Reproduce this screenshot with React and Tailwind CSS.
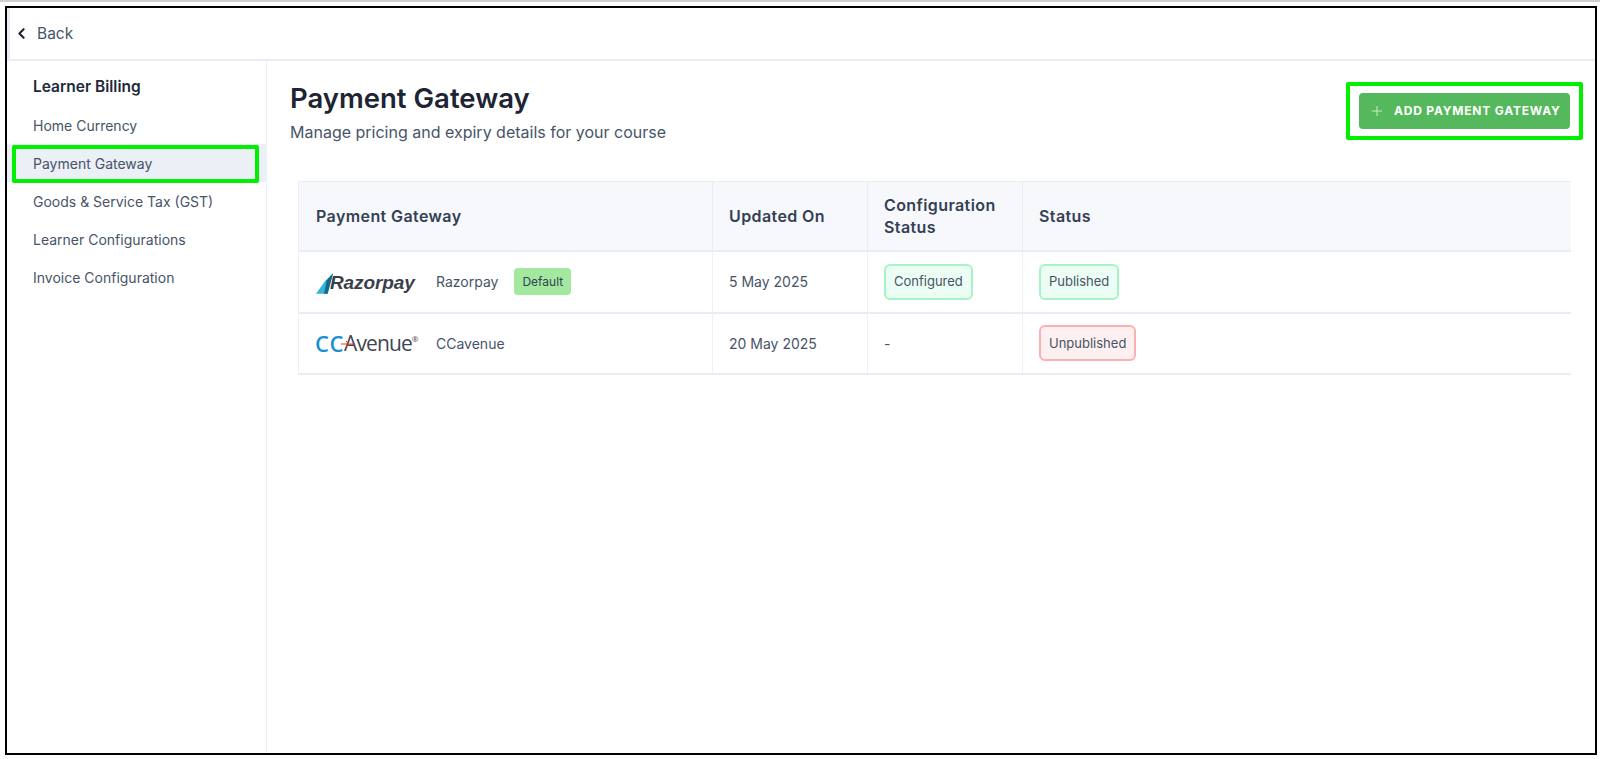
import { ChevronLeft, Plus } from 'lucide-react';

const navItems = ['Home Currency', 'Payment Gateway', 'Goods & Service Tax (GST)', 'Learner Configurations', 'Invoice Configuration'];

function Badge({ tone, children }) {
  const tones = {
    green: 'bg-[#ecfdf3] border-[#a6f4c5]',
    red: 'bg-[#fef0f0] border-[#fdb0b0]',
  };
  return (
    <span className={`inline-flex items-center h-[36px] px-[8px] rounded-[6px] border-2 text-[13px] text-[#475467] ${tones[tone]}`}>
      {children}
    </span>
  );
}

function RazorpayLogo() {
  return (
    <div className="flex items-end w-[107px] h-[26px]">
      <svg width="17" height="23" viewBox="0 0 19 23" className="shrink-0">
        <path d="M19 0 L13 23 L0 23 L10 9 Z" fill="#35b6d6" />
        <path d="M19 0 L13 23 L9 23 L12 8 Z" fill="#12688f" />
      </svg>
      <span className="ml-[-3px] text-[19px] leading-[24px] font-bold italic tracking-[-0.1px] text-[#3a3f4a] font-['Liberation_Sans',sans-serif]">Razorpay</span>
    </div>
  );
}

function CCAvenueLogo() {
  return (
    <div className="relative flex items-center w-[108px] h-[28px] ml-[-1px] font-['Open_Sans',sans-serif]">
      <span className="text-[22px] font-semibold tracking-[0.6px] text-[#1a8fd1]">CC</span>
      <span className="text-[21px] tracking-[-0.9px] text-[#3f4450]">Avenue</span>
      <span className="text-[8px] text-[#3f4450] mb-[8px]">®</span>
      <svg width="14" height="6" viewBox="0 0 14 6" className="absolute left-[26px] top-[12px]">
        <path d="M0 3 L14 3" stroke="#e2403a" strokeWidth="1" />
        <path d="M5 0 L8 3 L5 6" stroke="#e2403a" strokeWidth="1" fill="none" />
      </svg>
    </div>
  );
}

const rows = [
  { logo: <RazorpayLogo />, name: 'Razorpay', isDefault: true, updated: '5 May 2025', config: 'Configured', status: 'Published', tone: 'green' },
  { logo: <CCAvenueLogo />, name: 'CCavenue', updated: '20 May 2025', config: null, status: 'Unpublished', tone: 'red' },
];

export default function App() {
  return (
    <div className="h-[759px] bg-white border-t-2 border-[#cfcfcf] pt-[4px] pl-[5px] pr-[3px] pb-[4px] font-['Inter',sans-serif] overflow-hidden">
      <div className="h-full border-[2px] border-black flex flex-col bg-white">
        <div className="h-[53px] shrink-0 flex items-center border-b-2 border-l-[3px] border-[#e8ecf4] pl-[3px] gap-[7px] text-[#475467] text-[15.5px]">
          <ChevronLeft size={17} strokeWidth={3} className="text-[#1d2433]" />
          <span>Back</span>
        </div>

        <div className="flex-1 flex min-h-0">
          <aside className="w-[260px] shrink-0 border-r border-[#eef0f5] pt-[7px]">
            <div className="h-[38px] pl-[26px] flex items-center text-[15.5px] font-semibold text-[#1d2939]">Learner Billing</div>
            {navItems.map((item) => {
              const active = item === 'Payment Gateway';
              return (
                <div key={item} className={`relative h-[38px] pl-[26px] flex items-center text-[14px] text-[#475467] ${active ? 'bg-[#ebeff6]' : ''}`}>
                  {item}
                  {active && <span className="absolute left-[5px] top-[1px] w-[247px] h-[38px] border-[4px] border-[#00f000] rounded-[2px]" />}
                </div>
              );
            })}
          </aside>

          <main className="flex-1 min-w-0 pl-[23px] pr-[24px]">
            <div className="flex items-start justify-between h-[120px]">
              <div className="pt-[19px]">
                <h1 className="text-[27.5px] leading-[36px] font-semibold text-[#1d2433]">Payment Gateway</h1>
                <p className="mt-[5px] text-[16px] leading-[22px] text-[#475467]">Manage pricing and expiry details for your course</p>
              </div>
              <div className="mt-[21px] mr-[-12px] px-[9px] py-[7px] border-[4px] border-[#00f000] rounded-[2px]">
                <button className="flex items-center h-[36px] w-[211px] pl-[10px] gap-[9px] rounded-[4px] bg-[#55b85c] text-white text-[12px] font-bold tracking-[0.8px]">
                  <Plus size={16} strokeWidth={1.5} className="opacity-70" />
                  ADD PAYMENT GATEWAY
                </button>
              </div>
            </div>

            <div className="ml-[8px] border-l border-[#eef0f5]">
              <div className="flex h-[71px] bg-[#f7f8fc] border-t border-b-2 border-[#e8ecf4] text-[16px] tracking-[0.4px] font-semibold text-[#344054] leading-[22px]">
                <div className="w-[413px] flex items-center pl-[17px]">Payment Gateway</div>
                <div className="w-[155px] flex items-center pl-[16px] border-l border-[#e8ecf4]">Updated On</div>
                <div className="w-[155px] flex items-center pl-[16px] border-l border-[#e8ecf4]">Configuration<br />Status</div>
                <div className="w-[155px] flex items-center pl-[16px] border-l border-[#e8ecf4]">Status</div>
              </div>
              {rows.map((row) => (
                <div key={row.name} className="flex h-[61.5px] border-b-2 border-[#e8ecf4] text-[14px] text-[#475467]">
                  <div className="w-[413px] flex items-center pl-[17px]">
                    {row.logo}
                    <span className="ml-[13px]">{row.name}</span>
                    {row.isDefault && (
                      <span className="ml-[16px] flex items-center h-[27px] px-[8px] rounded-[4px] bg-[#a3e89f] text-[12px] text-[#344054]">Default</span>
                    )}
                  </div>
                  <div className="w-[155px] flex items-center pl-[16px] border-l border-[#eef0f5]">{row.updated}</div>
                  <div className="w-[155px] flex items-center pl-[16px] border-l border-[#eef0f5]">
                    {row.config ? <Badge tone="green">{row.config}</Badge> : '-'}
                  </div>
                  <div className="w-[155px] flex items-center pl-[16px] border-l border-[#eef0f5]">
                    <Badge tone={row.tone}>{row.status}</Badge>
                  </div>
                </div>
              ))}
            </div>
          </main>
        </div>
      </div>
    </div>
  );
}
